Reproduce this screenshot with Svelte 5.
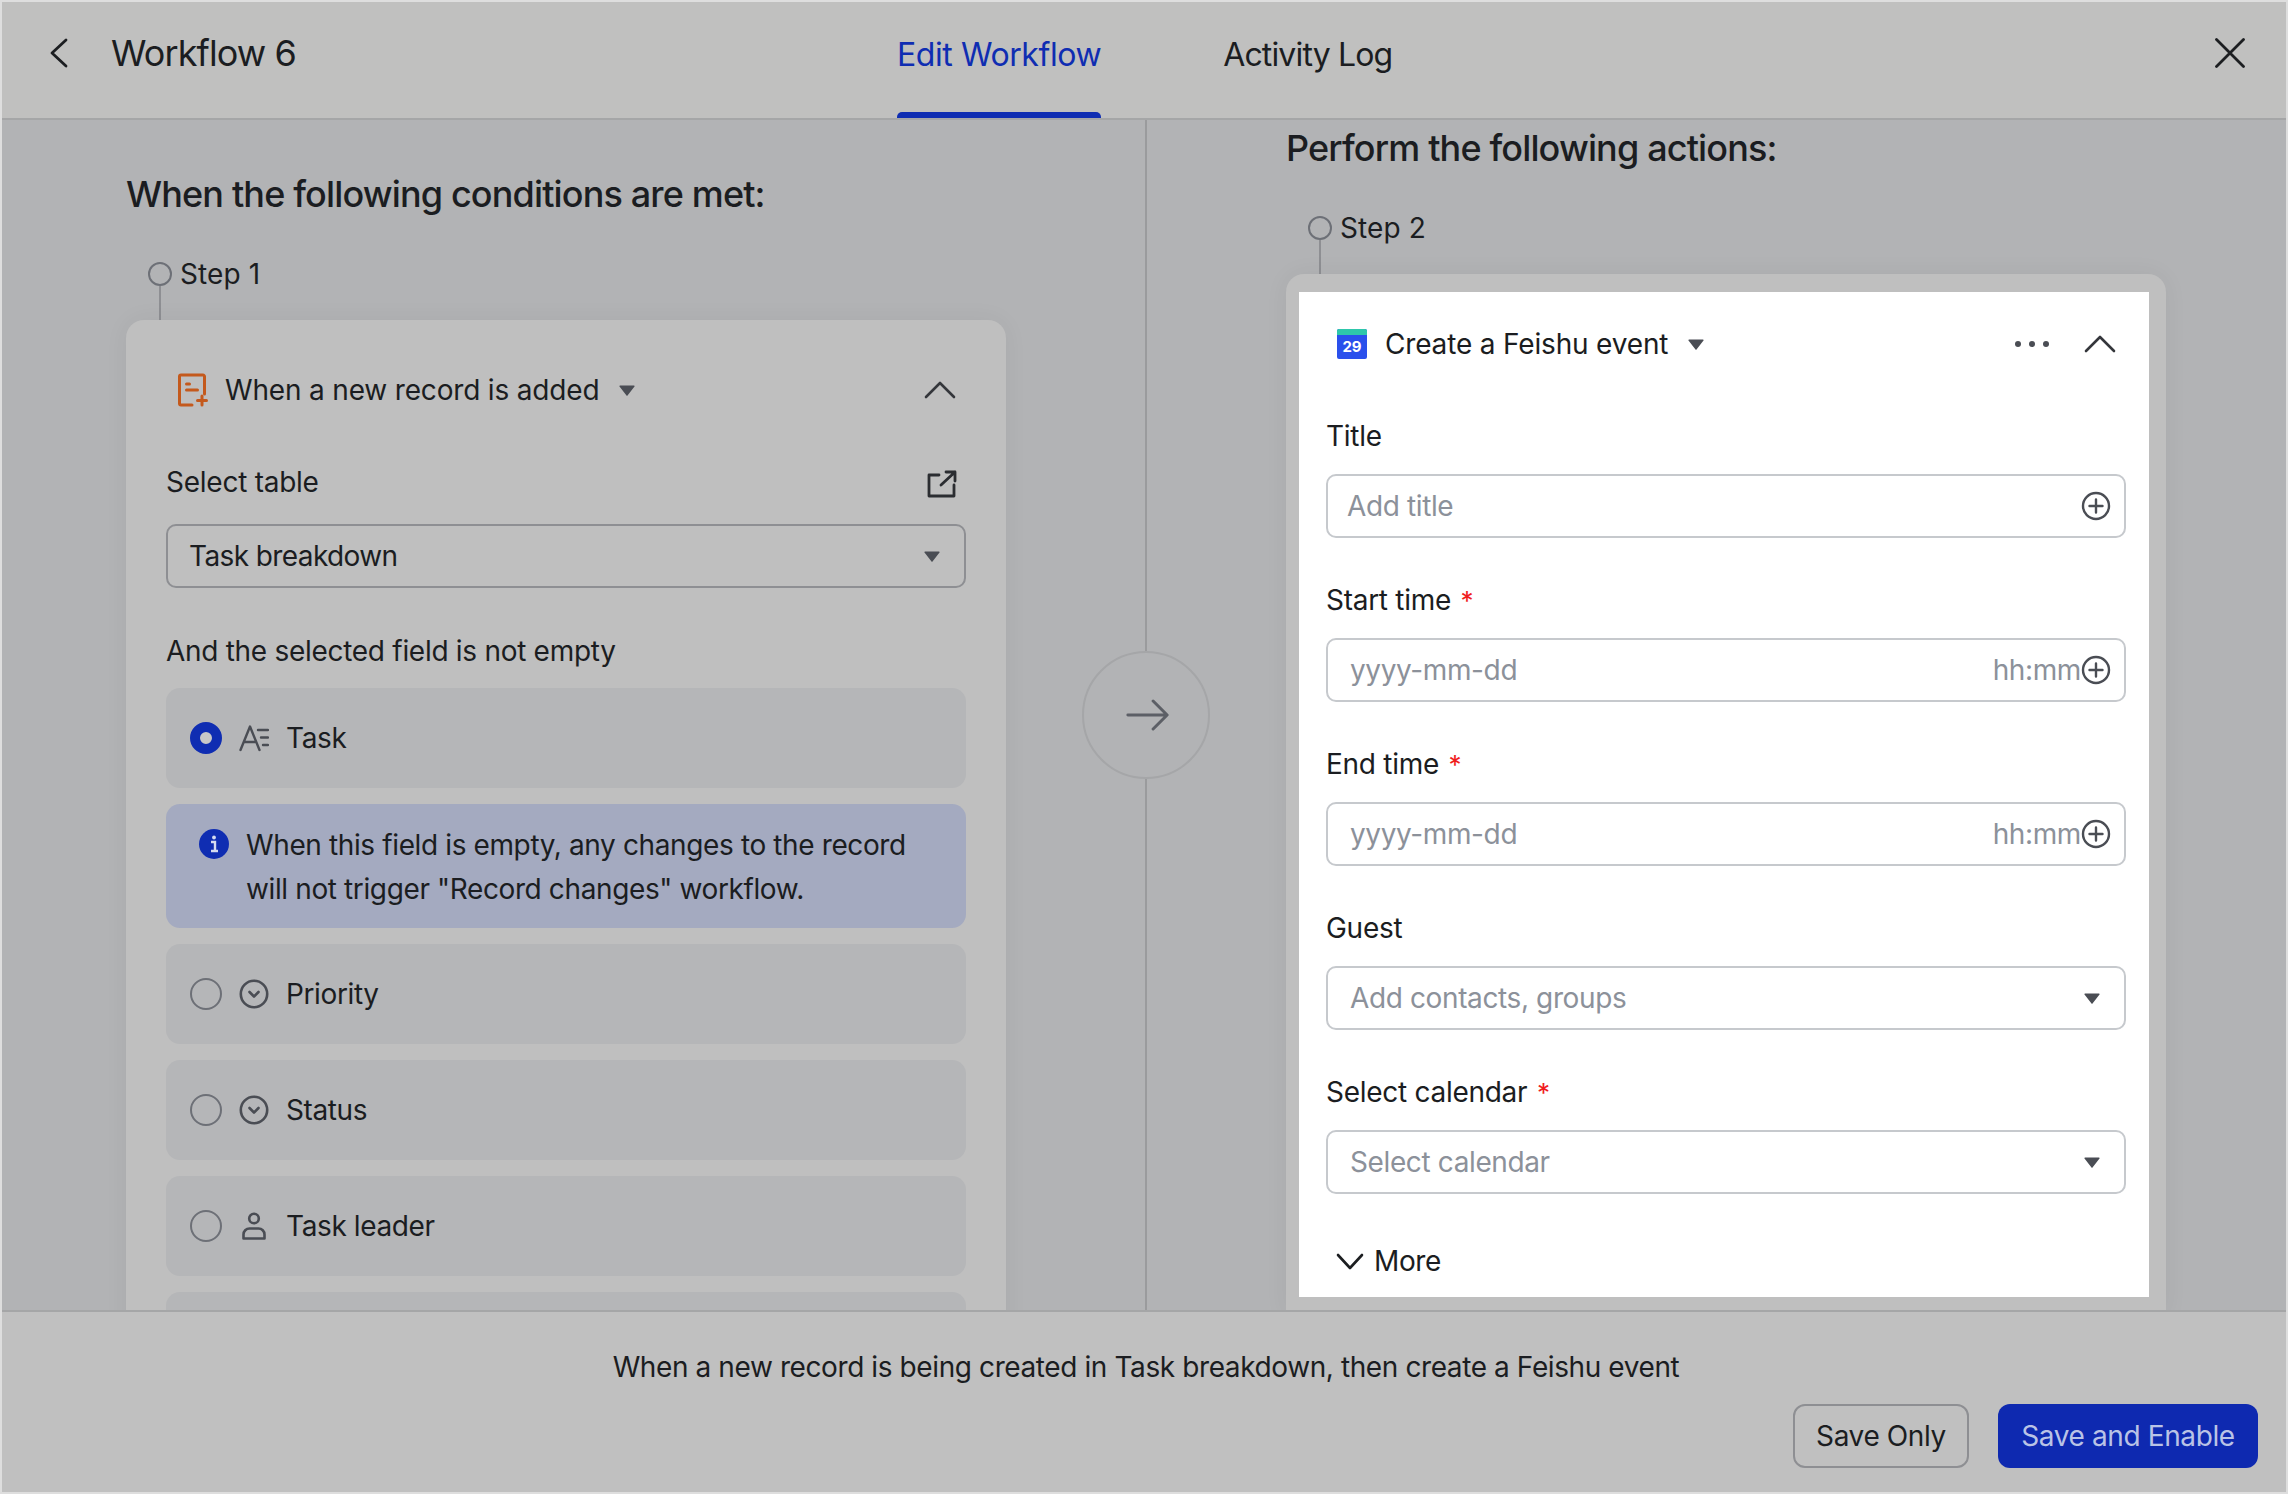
<script>
  const rows = [
    { label: 'Priority', icon: 'option' },
    { label: 'Status', icon: 'option' },
    { label: 'Task leader', icon: 'person' }
  ];
  const fields = [
    { label: 'Start time', required: true },
    { label: 'End time', required: true }
  ];
</script>

{#snippet tri(cls)}
  <svg class={'tri ' + cls} viewBox="0 0 16 11"><path d="M1 0.5h14a.6.6 0 0 1 .5.9L8.5 10.5a.6.6 0 0 1-1 0L.5 1.4A.6.6 0 0 1 1 .5z" fill="#4a4d54"/></svg>
{/snippet}

{#snippet plus()}
  <svg class="plus" viewBox="0 0 30 30" fill="none" stroke="#4a4d54" stroke-width="2.4"><circle cx="15" cy="15" r="13"/><path d="M15 8.5v13M8.5 15h13" stroke-linecap="round"/></svg>
{/snippet}

{#snippet chevUp()}
  <svg class="chev-up" viewBox="0 0 32 18" fill="none" stroke="#34363b" stroke-width="2.6" stroke-linecap="round" stroke-linejoin="round"><path d="M2 16L16 2l14 14"/></svg>
{/snippet}

<div class="page">
  <header class="top">
    <div class="title-group">
      <svg class="back" viewBox="0 0 18 30" fill="none" stroke="#1c1e21" stroke-width="2.8" stroke-linecap="round" stroke-linejoin="round"><path d="M16 2L2 15l14 13"/></svg>
      <h1>Workflow 6</h1>
    </div>
    <nav class="tabs">
      <span class="tab active">Edit Workflow</span>
      <span class="tab log">Activity Log</span>
    </nav>
    <svg class="close" viewBox="0 0 30 30" fill="none" stroke="#1c1e21" stroke-width="2.8" stroke-linecap="round"><path d="M1.5 1.5l27 27M28.5 1.5l-27 27"/></svg>
  </header>

  <main class="main">
    <section class="panel left">
      <h2>When the following conditions are met:</h2>
      <div class="step"><span class="dot"></span><span>Step 1</span></div>
      <div class="connector"></div>
      <div class="card">
        <div class="card-head">
          <svg class="doc" viewBox="0 0 30 34" fill="none" stroke="#c4591c" stroke-width="3" stroke-linecap="round" stroke-linejoin="round">
            <path d="M14 32H3a1.5 1.5 0 0 1-1.5-1.5v-27A1.5 1.5 0 0 1 3 2h22a1.5 1.5 0 0 1 1.5 1.5V21"/>
            <path d="M8.5 11h3M8.5 17h11M24 23v9M19.5 27.5h9"/>
          </svg>
          <span class="head-text">When a new record is added</span>
          {@render tri('head-tri')}
          <span class="grow"></span>
          {@render chevUp()}
        </div>
        <div class="label-row">
          <span>Select table</span>
          <svg class="ext" viewBox="0 0 30 28" fill="none" stroke="#2b2d31" stroke-width="2.8" stroke-linecap="round" stroke-linejoin="round"><path d="M12 5H2v21h25V15"/><path d="M14 15L28 2M19 2h9v9"/></svg>
        </div>
        <div class="select">
          <span>Task breakdown</span>
          {@render tri('')}
        </div>
        <p class="note">And the selected field is not empty</p>
        <div class="list">
          <div class="row">
            <span class="radio on"></span>
            <svg class="ficon" viewBox="0 0 30 26" fill="none" stroke="#4a4d54" stroke-width="2.4" stroke-linecap="round" stroke-linejoin="round"><path d="M1.5 25L11 1.5 20.5 25M5.5 17h11"/><path d="M19 5h10M22 12.5h7M24 20h5"/></svg>
            <span>Task</span>
          </div>
          <div class="info">
            <svg class="info-i" viewBox="0 0 30 30"><circle cx="15" cy="15" r="15" fill="#0f2db2"/><path d="M12 13h4v8M12 22h7" stroke="#d5dbef" stroke-width="2.4" fill="none"/><circle cx="15" cy="8.5" r="1.9" fill="#d5dbef"/></svg>
            <p>When this field is empty, any changes to the record will not trigger "Record changes" workflow.</p>
          </div>
          {#each rows as row}
            <div class="row">
              <span class="radio"></span>
              {#if row.icon === 'option'}
                <svg class="ficon" viewBox="0 0 30 30" fill="none" stroke="#4a4d54" stroke-width="2.6" stroke-linecap="round" stroke-linejoin="round"><circle cx="15" cy="15" r="13.2"/><path d="M10.5 13l4.5 4.5 4.5-4.5"/></svg>
              {:else}
                <svg class="ficon" viewBox="0 0 30 28" fill="none" stroke="#4a4d54" stroke-width="2.6" stroke-linejoin="round"><circle cx="15" cy="6.5" r="4.8"/><path d="M4.5 26.5v-4a6 6 0 0 1 6-6h9a6 6 0 0 1 6 6v4z"/></svg>
              {/if}
              <span>{row.label}</span>
            </div>
          {/each}
          <div class="row"></div>
        </div>
      </div>
    </section>

    <div class="flow-arrow">
      <svg viewBox="0 0 46 34" fill="none" stroke="#5c5f66" stroke-width="3.2" stroke-linecap="round" stroke-linejoin="round"><path d="M2 17h41M29 2l15 15-15 15"/></svg>
    </div>

    <section class="panel right">
      <h2>Perform the following actions:</h2>
      <div class="step"><span class="dot"></span><span>Step 2</span></div>
      <div class="connector"></div>
      <div class="card card-action">
        <div class="sheet">
          <div class="sheet-head">
            <span class="cal"><span class="cal-top"></span><span class="cal-num">29</span></span>
            <span class="head-text">Create a Feishu event</span>
            {@render tri('head-tri')}
            <span class="grow"></span>
            <span class="dots"><i></i><i></i><i></i></span>
            {@render chevUp()}
          </div>

          <div class="lab first">Title</div>
          <div class="input"><span class="ph">Add title</span>{@render plus()}</div>

          {#each fields as f}
            <div class="lab">{f.label} <em>*</em></div>
            <div class="input time">
              <span class="ph">yyyy-mm-dd</span>
              <span class="ph hm">hh:mm</span>{@render plus()}
            </div>
          {/each}

          <div class="lab">Guest</div>
          <div class="input time"><span class="ph">Add contacts, groups</span>{@render tri('')}</div>

          <div class="lab">Select calendar <em>*</em></div>
          <div class="input time"><span class="ph">Select calendar</span>{@render tri('')}</div>

          <div class="more">
            <svg viewBox="0 0 28 17" fill="none" stroke="#1c1e21" stroke-width="2.6" stroke-linecap="round" stroke-linejoin="round"><path d="M2 2l12 13L26 2"/></svg>
            <span>More</span>
          </div>
        </div>
      </div>
    </section>
  </main>

  <footer class="bottom">
    <p>When a new record is being created in Task breakdown, then create a Feishu event</p>
    <div class="actions">
      <button class="btn ghost">Save Only</button>
      <button class="btn primary">Save and Enable</button>
    </div>
  </footer>
</div>

<style>
  :global(body) { margin: 0; background: #dedede; }
  .page {
    box-sizing: border-box;
    width: 2288px; height: 1494px;
    border: 2px solid #dedede;
    display: flex; flex-direction: column;
    overflow: hidden;
    font-family: Inter, "Noto Sans", sans-serif;
    font-size: 28px; color: #1b1d21;
    letter-spacing: -0.38px;
    background: #b2b3b5;
  }
  .top {
    flex: none; box-sizing: border-box; height: 118px;
    display: flex; align-items: center;
    padding-right: 40px;
    background: #c0c0bf;
    border-bottom: 2px solid #a5a6a7;
  }
  .title-group { width: 895px; flex: none; display: flex; align-items: center; padding-left: 48px; box-sizing: border-box; margin-bottom: 14px; }
  .back { width: 18px; height: 30px; margin-right: 43px; }
  h1 { margin: 0; font-size: 36px; font-weight: 400; line-height: 44px; letter-spacing: -0.9px; }
  .tabs { align-self: stretch; display: flex; gap: 122px; }
  .tab { position: relative; display: flex; align-items: center; padding-bottom: 12px; box-sizing: border-box; font-size: 32px; letter-spacing: -0.42px; }
  .tab.log { letter-spacing: -0.85px; }
  .tab.active { color: #0f2db2; }
  .tab.active::after { content: ''; position: absolute; left: 0; right: 0; bottom: 0; height: 6px; background: #0f2db2; border-radius: 5px 5px 0 0; }
  .close { width: 30px; height: 30px; margin-left: auto; margin-bottom: 14px; margin-right: 1px; }

  .main { flex: 1; min-height: 0; display: flex; position: relative; }
  .panel { overflow: hidden; box-sizing: border-box; }
  .left { width: 1143px; flex: none; padding: 52px 0 0 124px; }
  .right { flex: 1; min-width: 0; padding: 6px 0 0 139px; border-left: 2px solid #9a9b9d; }
  h2 { margin: 0; font-size: 36px; font-weight: 500; line-height: 44px; letter-spacing: -0.85px; }
  .step { display: flex; align-items: center; gap: 8px; height: 24px; margin: 46px 0 0 22px; letter-spacing: 0.1px; }
  .dot { width: 24px; height: 24px; box-sizing: border-box; border: 2px solid #6d7077; border-radius: 50%; }
  .connector { width: 2px; height: 34px; margin-left: 33px; background: #8e8f93; }

  .card { width: 880px; box-sizing: border-box; background: #bfbfbf; border-radius: 18px 18px 0 0; padding: 50px 40px 0; box-shadow: 0 0 24px rgba(0,0,0,.05); }
  .card-head { height: 40px; display: flex; align-items: center; margin-left: 12px; margin-right: 10px; }
  .doc { width: 30px; height: 34px; margin-right: 17px; }
  .head-text { white-space: nowrap; letter-spacing: -0.17px; }
  .tri { width: 16px; height: 11px; flex: none; }
  .head-tri { margin-left: 20px; }
  .grow { flex: 1; }
  .chev-up { width: 32px; height: 18px; }
  .label-row { display: flex; justify-content: space-between; align-items: center; height: 40px; margin: 52px 9px 22px 0; letter-spacing: -0.25px; }
  .ext { width: 30px; height: 28px; margin-top: 3px; }
  .select { box-sizing: border-box; height: 64px; display: flex; align-items: center; justify-content: space-between; padding: 0 24px 0 21px; border: 2px solid #8e8f93; border-radius: 10px; letter-spacing: -0.6px; }
  .note { margin: 43px 0 17px; line-height: 40px; letter-spacing: -0.29px; }
  .list { display: flex; flex-direction: column; gap: 16px; }
  .row { height: 100px; flex: none; display: flex; align-items: center; padding: 0 24px; box-sizing: border-box; background: #b5b6b8; border-radius: 14px; }
  .radio { width: 32px; height: 32px; box-sizing: border-box; border: 2px solid #6d7077; border-radius: 50%; margin-right: 17px; flex: none; }
  .radio.on { border: 10px solid #0f2db2; background: #c8c8c8; }
  .ficon { width: 30px; height: 30px; margin-right: 17px; flex: none; }
  .info { display: flex; height: 124px; box-sizing: border-box; padding: 19px 20px 0 33px; background: #a4aac0; border-radius: 14px; }
  .info-i { width: 30px; height: 30px; flex: none; margin: 6px 17px 0 0; }
  .info p { margin: 0; line-height: 44px; }

  .flow-arrow { position: absolute; left: 1080px; top: 531px; width: 128px; height: 128px; box-sizing: border-box; border: 2px solid #a5a6a8; border-radius: 50%; background: #b2b3b5; display: flex; align-items: center; justify-content: center; }
  .flow-arrow svg { width: 43px; height: 32px; margin-left: 2px; }

  .card-action { padding: 18px 17px 18px 13px; }
  .sheet { background: #fff; padding: 32px 23px 16px 27px; }
  .sheet-head { height: 40px; display: flex; align-items: center; padding-left: 11px; }
  .cal { width: 30px; height: 30px; position: relative; margin-right: 18px; background: #2a50ec; border-radius: 2px; display: flex; flex-direction: column; align-items: center; overflow: hidden; }
  .cal-top { width: 100%; height: 6px; background: #2ec7ab; flex: none; }
  .cal-num { color: #fff; font-size: 15px; font-weight: 700; line-height: 24px; letter-spacing: 0; }
  .dots { display: flex; gap: 8px; margin-right: 35px; }
  .dots i { width: 6px; height: 6px; background: #4a4d54; border-radius: 50%; }
  .sheet-head .chev-up { margin-right: 10px; }
  .lab { height: 40px; line-height: 40px; margin: 42px 0 18px; letter-spacing: -0.28px; }
  .lab.first { margin-top: 52px; }
  .lab em { font-style: normal; color: #f01d1d; margin-left: 2px; font-size: 26px; }
  .input { box-sizing: border-box; height: 64px; display: flex; align-items: center; padding: 0 13px 0 19px; border: 2px solid #c6c9cd; border-radius: 10px; }
  .input.time { padding-left: 22px; justify-content: flex-start; }
  .input .tri { margin-left: auto; margin-right: 11px; }
  .ph { color: #8c919a; white-space: nowrap; }
  .hm { margin-left: auto; }
  .plus { width: 30px; height: 30px; margin-left: auto; flex: none; }
  .hm + .plus { margin-left: 0; }
  .more { display: flex; align-items: center; height: 40px; margin: 47px 0 0 10px; gap: 10px; }
  .more svg { width: 28px; height: 17px; }

  .bottom { flex: none; box-sizing: border-box; height: 182px; border-top: 2px solid #a5a6a7; background: #c0c0c0; padding: 35px 28px 24px 0; display: flex; flex-direction: column; position: relative; z-index: 1; }
  .bottom p { margin: 0; height: 40px; line-height: 40px; text-align: center; padding-left: 32px; letter-spacing: -0.4px; }
  .actions { display: flex; justify-content: flex-end; gap: 29px; margin-top: 17px; }
  .btn { box-sizing: border-box; height: 64px; padding: 0; font: inherit; letter-spacing: inherit; border-radius: 12px; }
  .ghost { width: 176px; background: transparent; border: 2px solid #8e8f93; color: #1b1d21; }
  .primary { width: 260px; background: #0e29b0; border: 0; color: #b9c3e6; }
</style>
